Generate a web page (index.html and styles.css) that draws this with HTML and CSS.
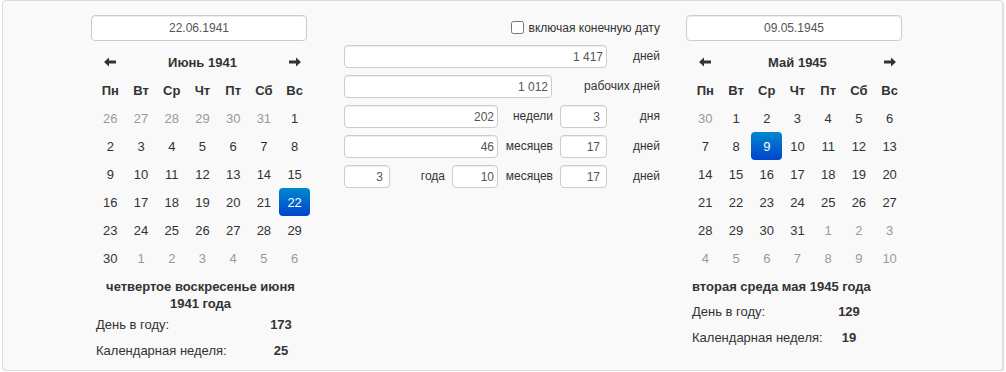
FILE: index.html
```html
<!DOCTYPE html>
<html lang="ru">
<head>
    <meta charset="UTF-8">
    <meta name="viewport" content="width=device-width, initial-scale=1.0">
    <title>Калькулятор дат</title>
    <link rel="stylesheet" href="styles.css">
</head>
<body>
    <div class="calc-panel">
        <!-- start date -->
        <div class="date-column">
            <input class="date-input" type="text" value="22.06.1941" readonly>
            <table class="calendar">
                <thead>
                    <tr class="cal-nav">
                        <th><svg class="arrow" viewBox="0 0 12 10"><path d="M0 5 L5 0.5 L5 3.5 L12 3.5 L12 6.5 L5 6.5 L5 9.5 Z"/></svg></th>
                        <th colspan="5" class="cal-title">Июнь 1941</th>
                        <th><svg class="arrow" viewBox="0 0 12 10"><path d="M12 5 L7 0.5 L7 3.5 L0 3.5 L0 6.5 L7 6.5 L7 9.5 Z"/></svg></th>
                    </tr>
                    <tr class="cal-days">
                        <th>Пн</th><th>Вт</th><th>Ср</th><th>Чт</th><th>Пт</th><th>Сб</th><th>Вс</th>
                    </tr>
                </thead>
                <tbody>
                    <tr><td class="muted">26</td><td class="muted">27</td><td class="muted">28</td><td class="muted">29</td><td class="muted">30</td><td class="muted">31</td><td>1</td></tr>
                    <tr><td>2</td><td>3</td><td>4</td><td>5</td><td>6</td><td>7</td><td>8</td></tr>
                    <tr><td>9</td><td>10</td><td>11</td><td>12</td><td>13</td><td>14</td><td>15</td></tr>
                    <tr><td>16</td><td>17</td><td>18</td><td>19</td><td>20</td><td>21</td><td class="active">22</td></tr>
                    <tr><td>23</td><td>24</td><td>25</td><td>26</td><td>27</td><td>28</td><td>29</td></tr>
                    <tr><td>30</td><td class="muted">1</td><td class="muted">2</td><td class="muted">3</td><td class="muted">4</td><td class="muted">5</td><td class="muted">6</td></tr>
                </tbody>
            </table>
            <div class="stats stats-left">
                <div class="stats-desc">четвертое воскресенье июня 1941 года</div>
                <div class="stats-label">День в году:</div>
                <div class="stats-value">173</div>
                <div class="stats-label">Календарная неделя:</div>
                <div class="stats-value">25</div>
            </div>
        </div>

        <!-- difference -->
        <div class="diff-column">
            <label class="include-end">
                <input type="checkbox">
                включая конечную дату
            </label>
            <div class="diff-grid">
                <input class="num span-5" type="text" value="1 417" readonly>
                <span class="unit last">дней</span>

                <input class="num span-4 gap-right" type="text" value="1 012" readonly>
                <span class="unit last span-2">рабочих дней</span>

                <input class="num span-3" type="text" value="202" readonly>
                <span class="unit">недели</span>
                <input class="num wide-pad" type="text" value="3" readonly>
                <span class="unit last">дня</span>

                <input class="num span-3" type="text" value="46" readonly>
                <span class="unit">месяцев</span>
                <input class="num wide-pad" type="text" value="17" readonly>
                <span class="unit last">дней</span>

                <input class="num wide-pad" type="text" value="3" readonly>
                <span class="unit">года</span>
                <input class="num" type="text" value="10" readonly>
                <span class="unit">месяцев</span>
                <input class="num wide-pad" type="text" value="17" readonly>
                <span class="unit last">дней</span>
            </div>
        </div>

        <!-- end date -->
        <div class="date-column">
            <input class="date-input" type="text" value="09.05.1945" readonly>
            <table class="calendar">
                <thead>
                    <tr class="cal-nav">
                        <th><svg class="arrow" viewBox="0 0 12 10"><path d="M0 5 L5 0.5 L5 3.5 L12 3.5 L12 6.5 L5 6.5 L5 9.5 Z"/></svg></th>
                        <th colspan="5" class="cal-title">Май 1945</th>
                        <th><svg class="arrow" viewBox="0 0 12 10"><path d="M12 5 L7 0.5 L7 3.5 L0 3.5 L0 6.5 L7 6.5 L7 9.5 Z"/></svg></th>
                    </tr>
                    <tr class="cal-days">
                        <th>Пн</th><th>Вт</th><th>Ср</th><th>Чт</th><th>Пт</th><th>Сб</th><th>Вс</th>
                    </tr>
                </thead>
                <tbody>
                    <tr><td class="muted">30</td><td>1</td><td>2</td><td>3</td><td>4</td><td>5</td><td>6</td></tr>
                    <tr><td>7</td><td>8</td><td class="active">9</td><td>10</td><td>11</td><td>12</td><td>13</td></tr>
                    <tr><td>14</td><td>15</td><td>16</td><td>17</td><td>18</td><td>19</td><td>20</td></tr>
                    <tr><td>21</td><td>22</td><td>23</td><td>24</td><td>25</td><td>26</td><td>27</td></tr>
                    <tr><td>28</td><td>29</td><td>30</td><td>31</td><td class="muted">1</td><td class="muted">2</td><td class="muted">3</td></tr>
                    <tr><td class="muted">4</td><td class="muted">5</td><td class="muted">6</td><td class="muted">7</td><td class="muted">8</td><td class="muted">9</td><td class="muted">10</td></tr>
                </tbody>
            </table>
            <div class="stats stats-right">
                <div class="stats-desc">вторая среда мая 1945 года</div>
                <div class="stats-label">День в году:</div>
                <div class="stats-value">129</div>
                <div class="stats-label">Календарная неделя:</div>
                <div class="stats-value">19</div>
            </div>
        </div>
    </div>
</body>
</html>
```

FILE: styles.css
```css
body {
    margin: 0;
    background: #fff;
    font-family: "Liberation Sans", Arial, sans-serif;
    color: #333;
}
.calc-panel {
    display: flex;
    align-items: flex-start;
    box-sizing: border-box;
    width: 1001px;
    height: 371px;
    margin-left: 2px;
    padding: 14px 0 0 88px;
    background: #f9f9f9;
    border: 1px solid #dcdcdc;
    border-radius: 4px;
    box-shadow: 1px 1px 2px rgba(0, 0, 0, 0.15);
}
.date-column {
    width: 220px;
}
.date-column + .diff-column {
    margin-left: 33px;
}
.diff-column + .date-column {
    margin-left: 26px;
}
.date-input {
    display: block;
    box-sizing: border-box;
    width: 216px;
    height: 26px;
    margin: 0 0 7px 0;
    padding: 0 6px;
    font-family: "Liberation Sans", Arial, sans-serif;
    font-size: 12px;
    color: #555;
    text-align: center;
    background: #fff;
    border: 1px solid #ccc;
    border-radius: 4px;
    box-shadow: inset 0 1px 1px rgba(0, 0, 0, 0.075);
    outline: none;
}
.calendar {
    width: 215px;
    margin-left: 4px;
    table-layout: fixed;
    border-collapse: separate;
    border-spacing: 0;
    font-size: 13px;
}
.calendar th,
.calendar td {
    height: 28px;
    padding: 0;
    text-align: center;
}
.calendar th {
    font-weight: bold;
}
.calendar td.muted {
    color: #999;
}
.calendar td.active {
    color: #fff;
    background-image: linear-gradient(to bottom, #0088cc, #0044cc);
    border-radius: 4px;
}
.arrow {
    display: block;
    width: 12px;
    height: 10px;
    margin: 0 auto;
    fill: #333;
}
.stats {
    display: grid;
    margin-top: 6px;
    font-size: 13px;
}
.stats-left {
    grid-template-columns: 161px 48px;
    margin-left: 5px;
}
.stats-right {
    grid-template-columns: 136px 42px;
    margin-left: 6px;
}
.stats-desc {
    grid-column: 1 / 3;
    line-height: 17px;
    font-weight: bold;
    text-align: center;
}
.stats-right .stats-desc {
    padding-bottom: 4px;
    text-align: left;
    white-space: nowrap;
}
.stats-label,
.stats-value {
    line-height: 26px;
}
.stats-value {
    font-weight: bold;
    text-align: center;
}
.diff-column {
    width: 316px;
}
.include-end {
    display: flex;
    align-items: center;
    justify-content: flex-end;
    height: 25px;
    margin-bottom: 5px;
    font-size: 12px;
}
.include-end input {
    width: 13px;
    height: 13px;
    margin: 0 5px 0 0;
}
.diff-grid {
    display: grid;
    grid-template-columns: 46px 62px 46px 62px 47px 53px;
    grid-auto-rows: 23px;
    row-gap: 7px;
}
.num {
    box-sizing: border-box;
    width: 100%;
    height: 23px;
    margin: 0;
    padding: 0 3px 0 4px;
    font-family: "Liberation Sans", Arial, sans-serif;
    font-size: 12px;
    color: #555;
    text-align: right;
    background: #fff;
    border: 1px solid #ccc;
    border-radius: 4px;
    box-shadow: inset 0 1px 1px rgba(0, 0, 0, 0.075);
    outline: none;
}
.num.wide-pad {
    padding-right: 6px;
}
.num.gap-right {
    width: auto;
    margin-right: 8px;
}
.span-2 {
    grid-column: span 2;
}
.span-3 {
    grid-column: span 3;
}
.span-4 {
    grid-column: span 4;
}
.span-5 {
    grid-column: span 5;
}
.unit {
    padding-right: 7px;
    font-size: 12px;
    line-height: 23px;
    text-align: right;
}
.unit.last {
    padding-right: 0;
}
```
